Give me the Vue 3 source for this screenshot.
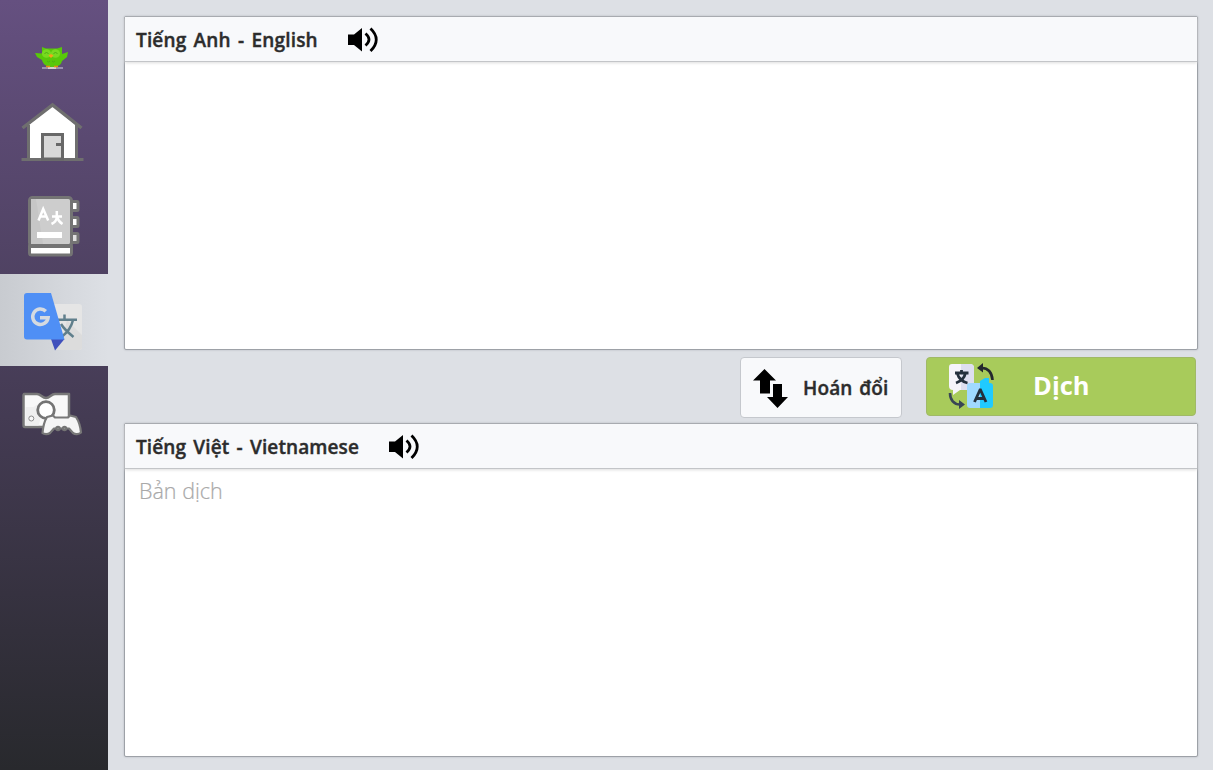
<script setup>
const panels = [
  { id: 'source', title: 'Tiếng Anh - English', placeholder: '' },
  { id: 'target', title: 'Tiếng Việt - Vietnamese', placeholder: 'Bản dịch' },
]
</script>

<template>
  <div class="app">
    <nav class="sidebar">
      <div class="logo">
        <svg width="34" height="24" viewBox="0 0 34 24">
          <path d="M7 22h21" stroke="#a9a0bd" stroke-width="1.6" />
          <path d="M13 22h8" stroke="#e4e2cf" stroke-width="1.6" />
          <path d="M0 7l7 .5V1l4 1.500h11L27 1v7l6-2-1 5-5 4c-1 4-4 6-10 6S8 18 7 14L2 11z" fill="#58c80a" />
          <ellipse cx="11.500" cy="7.500" rx="4.600" ry="4.300" fill="#78da20" />
          <ellipse cx="20.500" cy="7.500" rx="4.600" ry="4.300" fill="#78da20" />
          <path d="M9.500 7.500q2-2 4 0M18.500 7.500q2-2 4 0M12 15l1.500 1 1.500-1M17 15l1.500 1 1.500-1" stroke="#4dae14" fill="none" />
          <path d="M13.500 9.500l2.500-1.500 2.500 1.500-2.500 2.500z" fill="#f5a31a" />
          <path d="M11 20.500h4M19 20.500h4" stroke="#e98a12" stroke-width="1.500" />
        </svg>
      </div>
      <div class="item home">
        <svg width="64" height="62" viewBox="0 0 64 62">
          <path d="M7 25L32.500 5 57 25v33H7z" fill="#fff" />
          <path d="M8.500 24v34M56.500 24v34" stroke="#6f6f6f" stroke-width="3" />
          <path d="M2.500 27L32.500 4l29 23" fill="none" stroke="#6f6f6f" stroke-width="3.400" />
          <path d="M1.500 58.500h62" stroke="#6f6f6f" stroke-width="3.200" />
          <path d="M22.500 58V33.500h20V58z" fill="#d8d8d8" stroke="#686868" stroke-width="3" />
          <path d="M36 43.500h5" stroke="#686868" stroke-width="3" />
        </svg>
      </div>
      <div class="item book">
        <svg width="54" height="64" viewBox="0 0 54 64">
          <g stroke="#747474" stroke-width="3">
            <rect x="43" y="6.500" width="8" height="9" rx="1" fill="#fff" />
            <rect x="43" y="22.500" width="8" height="9" rx="1" fill="#fff" />
            <rect x="43" y="38.500" width="8" height="9" rx="1" fill="#e0e0e0" />
            <rect x="2.500" y="49" width="42" height="11" rx="2" fill="#fff" />
            <rect x="2.500" y="2.500" width="42" height="48" rx="3" fill="#cdcdcd" />
          </g>
          <path d="M4 4h5l7 45H4z" fill="#c6c6c6" />
          <path d="M4 51.500h39" stroke="#747474" stroke-width="3" />
          <path d="M11.500 25.500l4.700-11.500 5 11.500M13.300 21.500h6M25 21.500h10M29.800 16v5.500c0 4-2 6-5.300 7.500M30 22c1 3 3 5.500 5.500 7" fill="none" stroke="#fff" stroke-width="2.500" />
          <path d="M10 40h25" stroke="#fff" stroke-width="6" />
        </svg>
      </div>
      <div class="item active">
        <svg width="60" height="60" viewBox="0 0 60 60">
          <path d="M28 12h28a3 3 0 0 1 3 3V55a3 3 0 0 1-3 3H32z" fill="#e5e5e5" />
          <path d="M44 28l15 15v12a3 3 0 0 1-3 3H32l8-12z" fill="#dcdcdc" />
          <path d="M35 27.700h19M41.500 22.500v5M50 28c-1.500 7-5 12-11.500 17M38 32c3 5 7 8.500 12.500 13" fill="none" stroke="#607f8c" stroke-width="2.500" />
          <path d="M28 47h13.500l-9.500 11.500z" fill="#4050bc" />
          <path d="M4 1h24l13.500 46.500H4a3 3 0 0 1-3-3V4a3 3 0 0 1 3-3z" fill="#4f8ff5" />
          <path d="M22.800 19.200a7.700 7.700 0 1 0 2.300 6.500H17" fill="none" stroke="#d5dae0" stroke-width="3.500" />
        </svg>
      </div>
      <div class="item game">
        <svg width="62" height="46" viewBox="0 0 62 46">
          <path d="M3 3h13c4 0 5 4 9 4s5-4 9-4h14v33H4c-1 0-1.500-1-1.500-2V4z" fill="#f8f8f8" stroke="#787878" stroke-width="2.500" stroke-linejoin="round" />
          <path d="M4.500 16h8l9-6 3 1-7 23.500h-13z" fill="#efefef" />
          <circle cx="25" cy="19" r="8.300" fill="#fff" stroke="#747474" stroke-width="2.800" />
          <circle cx="10.300" cy="27.500" r="2.500" fill="#f7f7f7" stroke="#8d8d8d" />
          <path d="M26 26l6-1.500 2 2h13l2-2 6 1.500c2 3 4.500 10 5 15.500-2 2-6 2-8 .5l-4-4.500H33l-4 4.500c-2 1.500-6 1.500-7.500 0 .5-6 2-12 4.500-16z" fill="#f5f5f5" stroke="#787878" stroke-width="2.200" stroke-linejoin="round" />
          <circle cx="37" cy="37.500" r="1.800" fill="#8c8c8c" stroke="#747474" stroke-width="2" />
          <circle cx="43.500" cy="37.500" r="1.800" fill="#8c8c8c" stroke="#747474" stroke-width="2" />
        </svg>
      </div>
    </nav>

    <main class="content">
      <template v-for="(panel, i) in panels" :key="panel.id">
        <section class="panel">
          <header class="head" :class="panel.id">
            <span class="title">{{ panel.title }}</span>
            <svg width="32" height="26" viewBox="0 0 32 26">
              <path d="M1 7.500h6L15 1v23.500l-8-6.500H1z" />
              <path d="M18.500 6.500q7 6 0 12" fill="none" stroke="#000" stroke-width="2.800" />
              <path d="M23.500 1.500q11.500 11 0 22.500" fill="none" stroke="#000" stroke-width="2.800" />
            </svg>
          </header>
          <div class="text">{{ panel.placeholder }}</div>
        </section>
        <div v-if="i === 0" class="actions">
          <button class="swap">
            <svg width="36" height="40" viewBox="0 0 36 40">
              <path d="M11.500 1L23 12.500h-6v13H7v-13H0zM20 16h9v13h6L24.500 40 14 29h6z" />
            </svg>
            <span>Hoán đổi</span>
          </button>
          <button class="translate">
            <svg width="46" height="46" viewBox="0 0 46 46">
              <path d="M4 1h18a4 4 0 0 1 4 4v18a4 4 0 0 1-4 4H12l-7 5v-5a4 4 0 0 1-4-4V4a3 3 0 0 1 3-3z" fill="#f5f4fa" />
              <path d="M13 1h9a4 4 0 0 1 4 4v18a4 4 0 0 1-4 4h-9z" fill="#dedff0" />
              <path d="M22 20h10v25H22a3 3 0 0 1-3-3V23a3 3 0 0 1 3-3z" fill="#a0d9ff" />
              <path d="M32 18l5-3h4v5h1a3 3 0 0 1 3 3v19a3 3 0 0 1-3 3H32z" fill="#20caff" />
              <path d="M7 10h13.500M13.500 7v3M17.500 10c-1 5-4 8-9.500 10M9.500 11c1 4 5 8 10 9" fill="none" stroke="#24303d" stroke-width="2.800" />
              <path d="M26.500 39l5.500-12h.5L38 39M28.500 35.500h8" fill="none" stroke="#24303d" stroke-width="2.800" />
              <path d="M33 5c7-.5 11 4.500 11.500 12" fill="none" stroke="#24282e" stroke-width="2.600" />
              <path d="M35 0v9.500L29 5z" fill="#24282e" />
              <path d="M2 30c0 7 4 11.500 10 11.500" fill="none" stroke="#394655" stroke-width="2.600" />
              <path d="M11 37v9l6-4.500z" fill="#394655" />
            </svg>
            <span>Dịch</span>
          </button>
        </div>
      </template>
    </main>
  </div>
</template>

<style>
body {
  overflow: hidden;
}
</style>

<style scoped>
.app {
  display: flex;
  width: 1213px;
  height: 770px;
  background: #dde0e5;
  font-family: "Open Sans", "Noto Sans", sans-serif;
  color: #2c2c2c;
}
svg {
  display: block;
  flex: none;
}
.sidebar {
  width: 108px;
  background: linear-gradient(#655080, #28292d);
}
.logo {
  height: 44px;
  padding: 46px 0 0 35px;
}
.item {
  box-sizing: border-box;
  height: 92px;
  display: flex;
  align-items: center;
  justify-content: center;
}
.home {
  padding: 0 4px 9px 0;
}
.book {
  padding: 0 0 2px 0;
}
.active {
  padding: 4px 2px 0 0;
  background: linear-gradient(90deg, #c8cbd0, #dde0e5);
}
.game {
  padding: 3px 4px 0 0;
}
.content {
  flex: 1;
  padding: 16px 15px 0 16px;
}
.panel {
  box-sizing: border-box;
  height: 334px;
  border: 1px solid #9da1a7;
  border-radius: 2px;
  background: #fff;
  box-shadow: 0 0 2px #adb0b6;
}
.head {
  box-sizing: border-box;
  height: 45px;
  display: flex;
  align-items: center;
  gap: 29px;
  padding: 2px 0 0 11px;
  border-bottom: 1px solid #c3c5c8;
  background: #f8f9fb;
  box-shadow: 0 1px 3px #dedede;
  font-size: 19px;
  font-weight: 600;
  letter-spacing: 0.15px;
  word-spacing: 2.200px;
}
.head.target {
  letter-spacing: 0.1px;
}
.title,
.swap span {
  white-space: nowrap;
  -webkit-text-stroke: 0.400px #2c2c2c;
}
.text {
  padding: 7px 14px;
  font-size: 21.500px;
  line-height: 30px;
  font-weight: 300;
  color: #a9a9a9;
  -webkit-text-stroke: 0.200px #a9a9a9;
}
.actions {
  height: 73px;
  display: flex;
  justify-content: flex-end;
  align-items: flex-start;
  gap: 24px;
  padding: 7px 2px 0 0;
  box-sizing: border-box;
}
button {
  box-sizing: border-box;
  display: flex;
  align-items: center;
  font-family: inherit;
  border-radius: 4px;
  white-space: nowrap;
}
.swap {
  width: 162px;
  height: 61px;
  padding: 0 0 0 12px;
  gap: 14px;
  border: 1px solid #c5c8cd;
  background: #f8f9fb;
  color: #2c2c2c;
  font-size: 19px;
  font-weight: 600;
  letter-spacing: 0.150px;
  word-spacing: 1.500px;
}
.translate {
  width: 270px;
  height: 59px;
  padding: 0 0 2px 21px;
  gap: 39px;
  border: 1px solid #a0b967;
  background: #a8cb5b;
  color: #fff;
  font-size: 25.500px;
  font-weight: 700;
}
.translate span {
  margin-top: -2px;
}
</style>
